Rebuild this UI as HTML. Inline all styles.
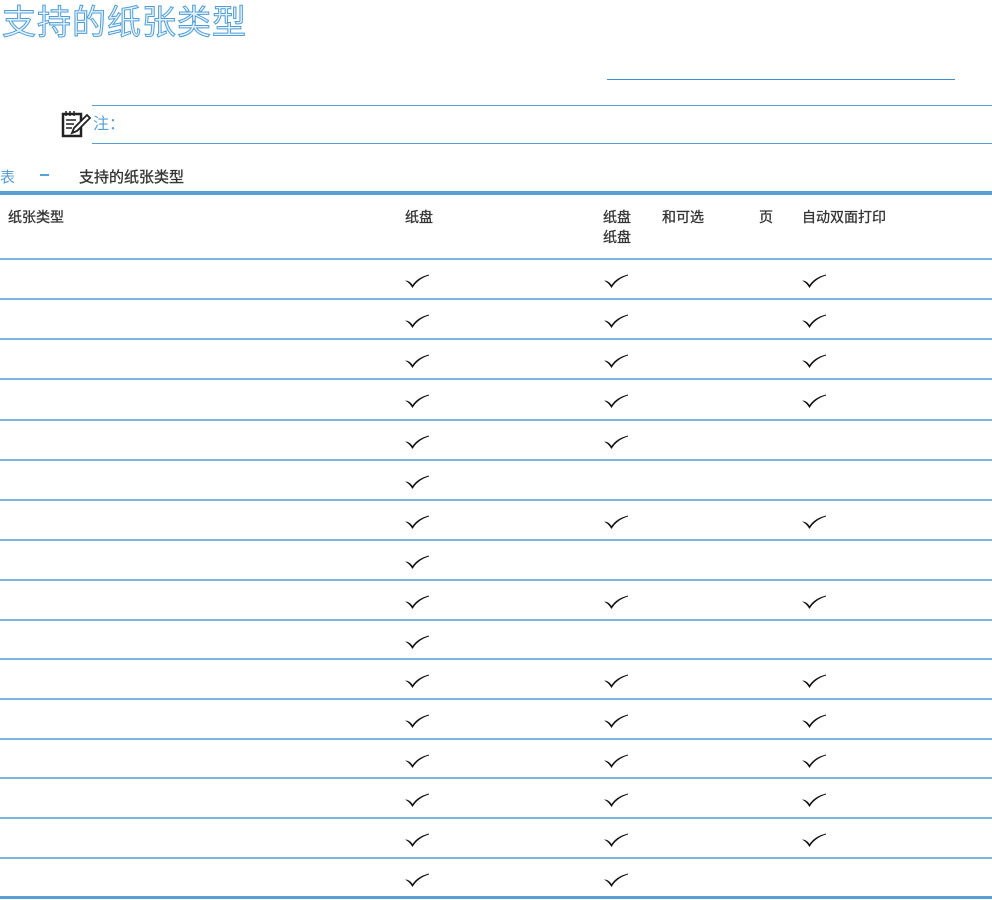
<!DOCTYPE html>
<html><head><meta charset="utf-8"><style>
body{margin:0;width:992px;height:900px;background:#fff;position:relative;overflow:hidden;font-family:"Liberation Sans","Noto Sans CJK SC",sans-serif;}
.a{position:absolute}
.t{font-size:34px;color:#eaf3fb;-webkit-text-stroke:1px #4f9ed8;left:2px;top:-5px;letter-spacing:1px}
.hl{position:absolute;left:0;width:992px;height:2px;background:#5aa0d6}
.cell{position:absolute;font-size:14px;color:#333;-webkit-text-stroke:0.3px #333}
.ck{position:absolute;width:24px;height:14px}
</style></head><body>
<div class="a t">支持的纸张类型</div>
<div class="a" style="left:607px;top:79px;width:348px;height:1px;background:#3d8fd0"></div>
<div class="a" style="left:92px;top:105px;width:900px;height:1px;background:#5aa0d6"></div>
<div class="a" style="left:92px;top:143px;width:900px;height:1px;background:#5aa0d6"></div>
<svg class="a" style="left:61px;top:109px" width="30" height="30" viewBox="0 0 30 30"><rect x="2" y="5" width="18" height="22" fill="#fff" stroke="#222" stroke-width="2.5"/><path d="M5 2v5M9 2v5M13 2v5M5 11h10M5 15h8M5 19h6" stroke="#222" stroke-width="1.5"/><path d="M11 24l2-5 13-13 3 3-13 13z" fill="#fff" stroke="#222" stroke-width="1.8"/></svg>
<div class="a" style="left:93px;top:110px;font-size:16px;color:#5aa0d6">注：</div>
<div class="a" style="left:0;top:166px;font-size:15px;color:#5aa0d6">表</div>
<div class="a" style="left:40px;top:174px;width:9px;height:2px;background:#5aa0d6"></div>
<div class="a" style="left:79px;top:166px;font-size:15px;color:#333;-webkit-text-stroke:0.3px #333">支持的纸张类型</div>
<div class="hl" style="top:191px;height:4px"></div>
<div class="cell" style="left:8px;top:207px">纸张类型</div>
<div class="cell" style="left:405px;top:207px">纸盘</div>
<div class="cell" style="left:603px;top:207px">纸盘<br>纸盘</div>
<div class="cell" style="left:662px;top:207px">和可选</div>
<div class="cell" style="left:759px;top:207px">页</div>
<div class="cell" style="left:802px;top:207px">自动双面打印</div>
<div id="rows"></div>
<script>
var lines=[259,299,339,379,420,460,500,540,580,620,659,699,739,778,818,858];
var pat=["111","111","111","111","110","100","111","100","111","100","111","111","111","111","111","110"];
var xs=[405,604,802],h="";
lines.forEach(function(y,i){h+='<div class="hl" style="top:'+(y-1)+'px;background:#7db4e0"></div>';
for(var j=0;j<3;j++)if(pat[i][j]=="1")h+='<svg class="ck" style="left:'+xs[j]+'px;top:'+(y+15)+'px" viewBox="0 0 24 14"><path d="M0 6.5 C3 6.5 5.5 8 7.5 11 C11 6 16 2.5 24 0.5 L24 1.5 C16 4 11 8 7.5 14 C5.5 10.5 3 8 0 6.5z" fill="#111"/></svg>';});
h+='<div class="hl" style="top:896px;height:3px"></div>';
document.getElementById("rows").innerHTML=h;
</script>
</body></html>
